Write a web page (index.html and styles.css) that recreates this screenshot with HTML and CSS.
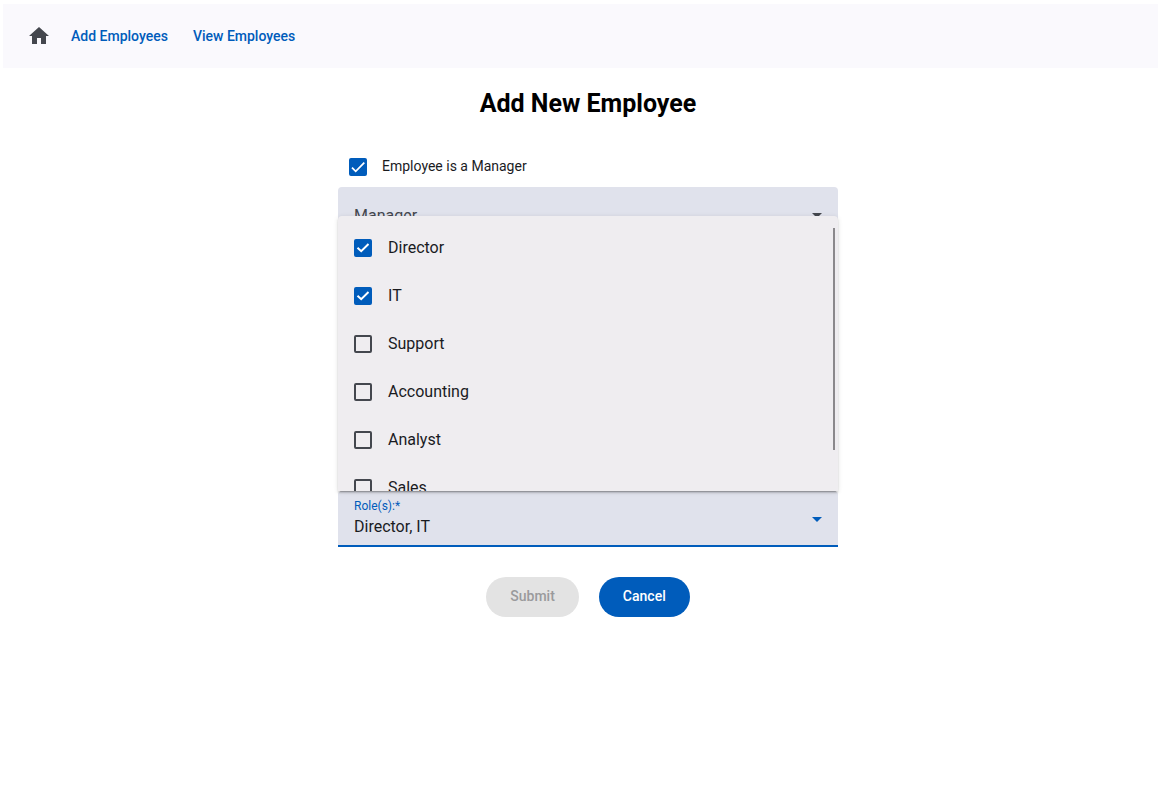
FILE: index.html
```
<!DOCTYPE html>
<html lang="en">
<head>
<meta charset="utf-8">
<meta name="viewport" content="width=device-width, initial-scale=1">
<title>Add New Employee</title>
<link rel="stylesheet" href="styles.css">
</head>
<body>
<header class="toolbar">
  <a class="home" href="#" aria-label="Home">
    <svg viewBox="0 0 24 24" width="24" height="24" fill="currentColor" aria-hidden="true"><path d="M10 20v-6h4v6h5v-8h3L12 3 2 12h3v8z"/></svg>
  </a>
  <nav class="nav">
    <a class="nav-link" href="#">Add Employees</a>
    <a class="nav-link" href="#">View Employees</a>
  </nav>
</header>
<main class="page">
  <h1 class="title">Add New Employee</h1>
  <form class="form">
    <label class="check-row"><input class="checkbox" type="checkbox" checked><span>Employee is a Manager</span></label>
    <div class="field">
      <select class="select" id="manager" aria-label="Manager"><option>Manager</option></select>
      <svg class="arrow" viewBox="0 0 10 5" aria-hidden="true"><path d="M0 0h10L5 5z"/></svg>
    </div>
    <div class="field field-active">
      <label class="field-label" for="roles">Role(s):*</label>
      <select class="select" id="roles"><option>Director, IT</option></select>
      <svg class="arrow" viewBox="0 0 10 5" aria-hidden="true"><path d="M0 0h10L5 5z"/></svg>
      <div class="panel">
        <label class="option"><input class="checkbox checkbox-option" type="checkbox" checked><span>Director</span></label>
        <label class="option"><input class="checkbox checkbox-option" type="checkbox" checked><span>IT</span></label>
        <label class="option"><input class="checkbox checkbox-option" type="checkbox"><span>Support</span></label>
        <label class="option"><input class="checkbox checkbox-option" type="checkbox"><span>Accounting</span></label>
        <label class="option"><input class="checkbox checkbox-option" type="checkbox"><span>Analyst</span></label>
        <label class="option"><input class="checkbox checkbox-option" type="checkbox"><span>Sales</span></label>
        <div class="scroll-thumb"></div>
      </div>
    </div>
    <div class="actions">
      <button class="button" type="submit" disabled>Submit</button>
      <button class="button button-primary" type="button">Cancel</button>
    </div>
  </form>
</main>
</body>
</html>
```
FILE: styles.css
```
* {
  box-sizing: border-box;
}

body {
  margin: 0;
  padding: 4px 0 0 3px;
  background: #fff;
  color: #1a1b1f;
  font-family: Roboto, "Helvetica Neue", sans-serif;
}

.toolbar {
  display: flex;
  align-items: center;
  gap: 20px;
  height: 64px;
  padding: 0 24px;
  background: #faf9fd;
}

.home {
  display: flex;
  color: #44474e;
}

.nav {
  display: flex;
  gap: 25px;
}

.nav-link {
  color: #005cbb;
  font-size: 14px;
  font-weight: 500;
  line-height: 20px;
  text-decoration: none;
}

.page {
  padding: 20px 0 0 15px;
}

.title {
  margin: 0;
  color: #000;
  font-size: 25px;
  font-weight: 700;
  line-height: 32px;
  text-align: center;
}

.form {
  width: 100%;
  max-width: 500px;
  margin: 27px auto 0;
}

.check-row {
  display: flex;
  align-items: center;
  gap: 15px;
  height: 40px;
  padding-left: 11px;
  font-size: 14px;
  line-height: 20px;
}

.check-row span {
  padding-bottom: 2px;
}

.checkbox {
  flex: none;
  width: 18px;
  height: 18px;
  margin: 0;
  border: 2px solid #44474e;
  border-radius: 2px;
  appearance: none;
}

.checkbox:checked {
  border-color: #005cbb;
  background: #005cbb url("data:image/svg+xml,%3Csvg xmlns='http://www.w3.org/2000/svg' viewBox='0 0 24 24'%3E%3Cpath fill='none' stroke='white' stroke-width='3' d='M1.7 12.9 8.1 19.3 22.8 4.6'/%3E%3C/svg%3E") center / 14px 14px no-repeat;
}

.checkbox-option:checked {
  background-image: url("data:image/svg+xml,%3Csvg xmlns='http://www.w3.org/2000/svg' viewBox='0 0 14 14'%3E%3Cpath fill='none' stroke='white' stroke-width='2' d='M1.5 6.7 5.2 10.2 12.5 3'/%3E%3C/svg%3E");
}

.field {
  position: relative;
  height: 56px;
  border-radius: 4px 4px 0 0;
  background: #e0e2ec;
}

.select {
  width: 100%;
  height: 56px;
  padding: 2px 40px 0 16px;
  border: 0;
  border-bottom: 1px solid #44474e;
  border-radius: 4px 4px 0 0;
  outline: 0;
  background: transparent;
  color: #44474e;
  font-family: inherit;
  font-size: 16px;
  line-height: 24px;
  appearance: none;
}

.arrow {
  position: absolute;
  top: 26px;
  right: 16px;
  width: 10px;
  height: 5px;
  fill: #44474e;
}

.field-active {
  margin-top: 248px;
}

.field-active .select {
  padding-top: 18px;
  border-bottom: 2px solid #005cbb;
  color: #1a1b1f;
}

.field-active .arrow {
  fill: #005cbb;
}

.field-label {
  position: absolute;
  top: 7px;
  left: 16px;
  color: #005cbb;
  font-size: 12px;
  line-height: 16px;
}

/* Opens upward from the roles field. */
.panel {
  position: absolute;
  z-index: 1;
  right: 0;
  bottom: 100%;
  left: 0;
  height: 275px;
  padding: 8px 0;
  overflow: hidden;
  border-radius: 4px 4px 0 0;
  background: #efedf0;
  box-shadow: 0 3px 1px -2px rgba(0, 0, 0, 0.2), 0 2px 2px rgba(0, 0, 0, 0.14), 0 1px 5px rgba(0, 0, 0, 0.12);
}

.option {
  display: flex;
  align-items: center;
  gap: 16px;
  height: 48px;
  padding: 0 16px;
  font-size: 16px;
  line-height: 24px;
}

.option span {
  padding-bottom: 1px;
}

.scroll-thumb {
  position: absolute;
  top: 12px;
  right: 3px;
  width: 2px;
  height: 222px;
  background: #8b898c;
}

.actions {
  display: flex;
  justify-content: center;
  gap: 20px;
  margin-top: 30px;
}

.button {
  height: 40px;
  padding: 0 24px 2px;
  border: 0;
  border-radius: 20px;
  background: #e3e3e3;
  color: #9a9a9c;
  font-family: inherit;
  font-size: 14px;
  font-weight: 500;
  line-height: 20px;
}

.button-primary {
  background: #005cbb;
  color: #fff;
}
```
